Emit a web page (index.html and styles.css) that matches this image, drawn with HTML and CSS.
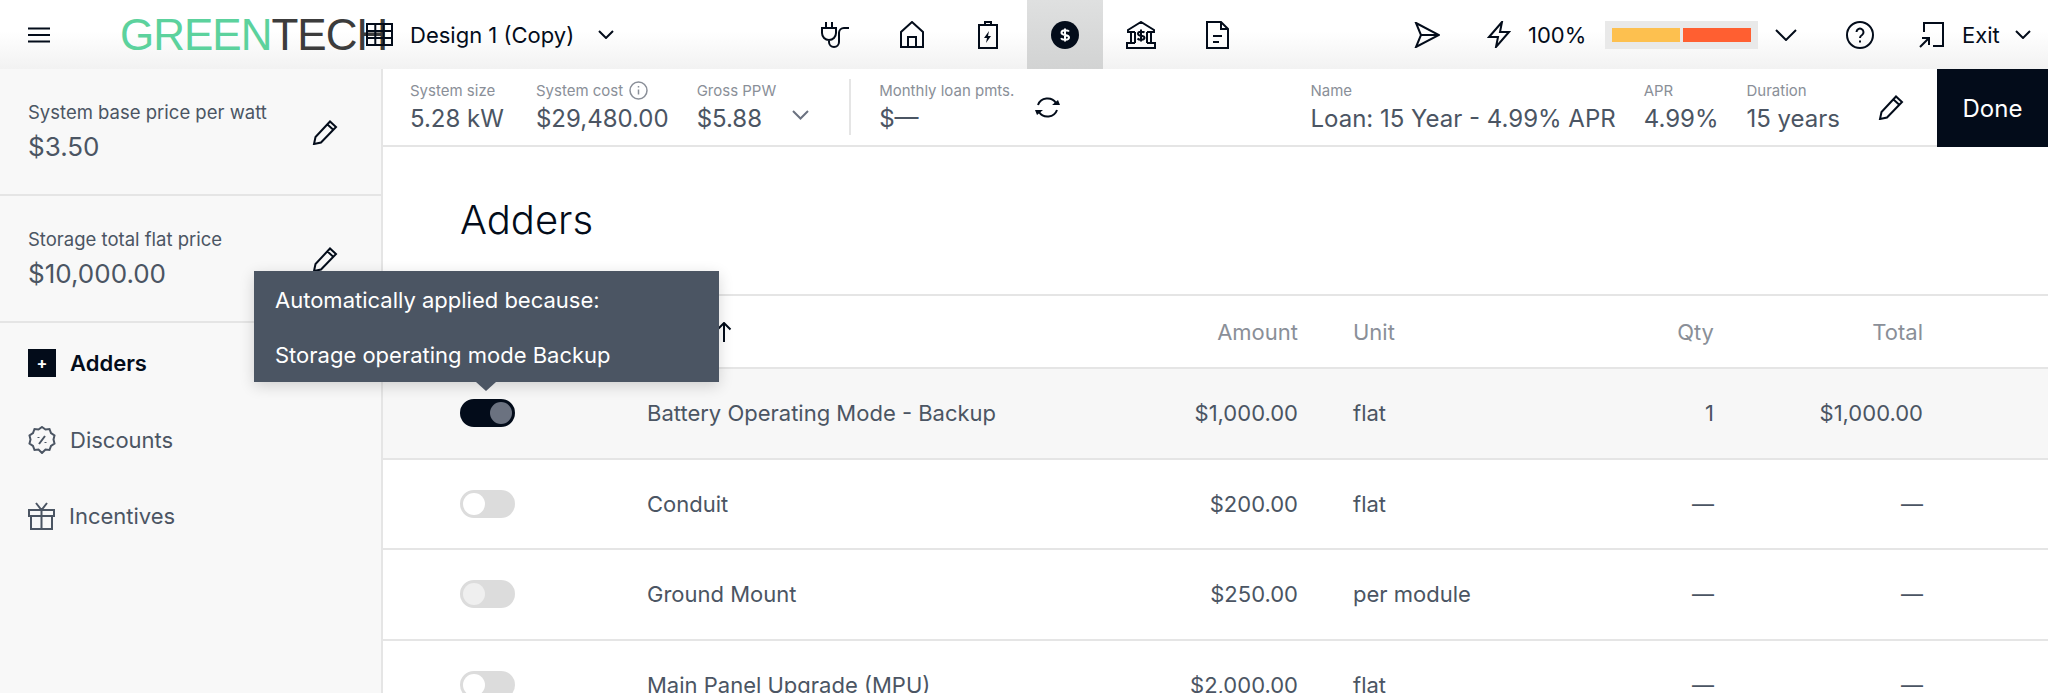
FILE: index.html
```html
<!DOCTYPE html>
<html lang="en">
<head>
<meta charset="utf-8">
<title>Adders</title>
<link rel="stylesheet" href="styles.css">
</head>
<body>
<div class="app">
  <header class="topbar">
    <div class="top-left">
      <svg class="ico burger" viewBox="0 0 24 16"><path d="M1 1.5h22M1 8h22M1 14.5h22"/></svg>
      <div class="logo"><span class="logo-green">GREEN</span><span class="logo-dark">TECH</span></div>
      <svg class="ico grid-ico" viewBox="0 0 27 23"><path d="M1 1h25v21H1zM9.3 1v21M17.7 1v21M1 8h25M1 15h25"/></svg>
      <span class="design">Design 1 (Copy)</span>
      <svg class="ico chev-sm" viewBox="0 0 16 9"><path d="M1 1l7 7 7-7"/></svg>
    </div>
    <nav class="tabs">
      <div class="tab"><svg class="ico" width="30" height="28" viewBox="0 0 30 28"><path d="M6 1v6M12 1v6M2 7h14v5a7 7 0 0 1-14 0zM9 19v2a5 5 0 0 0 10 0V12a5 5 0 0 1 5-5h5"/></svg></div>
      <div class="tab"><svg class="ico" width="24" height="27" viewBox="0 0 24 27"><path d="M1 26V11L12 1l11 10v15zM8 26V16h8v10"/></svg></div>
      <div class="tab"><svg class="ico" width="20" height="28" viewBox="0 0 20 28"><path d="M1 4h18v23H1zM7 4V1h6v3"/><path class="fill" d="M11 10l-5 7h3l-1 5 5-7h-3z"/></svg></div>
      <div class="tab active"><svg width="28" height="28" viewBox="0 0 28 28"><circle cx="14" cy="14" r="14" fill="#030c1a"/><path d="M18 10.500c-1-1.500-7.500-2-7.500 1.200 0 3.300 7.500 1.500 7.500 4.800 0 3-6.800 2.800-8 .7M14 7.500v13" fill="none" stroke="#fff" stroke-width="2"/></svg></div>
      <div class="tab"><svg class="ico" width="30" height="28" viewBox="0 0 30 28"><path d="M2 9L15 1l13 8v2h-3v11h4v5H1v-5h4V11H2zM5 11h4M25 11h-4M9 11v11M21 11v11M5 22h4M21 22h4"/><path d="M18.500 11.500c-1-1-6.500-1.500-6.500 1.200 0 3 6.500 1.300 6.500 4.100 0 2.500-5.500 2.500-7 .7M15 8.500v12"/></svg></div>
      <div class="tab"><svg class="ico" width="23" height="28" viewBox="0 0 23 28"><path d="M1 1h14l7 7v19H1zM15 1v7h7M7 15h9M7 21h6"/></svg></div>
    </nav>
    <div class="top-right">
      <svg class="ico send" width="26" height="26" viewBox="0 0 26 26"><path d="M2 1l23 12L2 25l5-12zM7 13h18"/></svg>
      <svg class="ico bolt" width="24" height="27" viewBox="0 0 24 27"><path d="M15 1L2 16h9l-2 10 13-15h-9z"/></svg>
      <span class="pct">100%</span>
      <div class="meter"><span class="seg seg-y"></span><span class="seg seg-o"></span></div>
      <svg class="ico chev-lg" viewBox="0 0 22 12"><path d="M1 1l10 10L21 1"/></svg>
      <svg class="ico help" width="28" height="28" viewBox="0 0 28 28"><circle cx="14" cy="14" r="13"/><path d="M10.500 11a3.500 3.500 0 1 1 5.500 3c-1.300.8-2 1.500-2 3M14 19.500v2"/></svg>
      <svg class="ico exit-ico" width="25" height="26" viewBox="0 0 25 26"><path d="M5 10V1h19v23H14M1 25l9-9M3 16h7v7"/></svg>
      <span class="exit">Exit</span>
      <svg class="ico chev-sm" viewBox="0 0 16 9"><path d="M1 1l7 7 7-7"/></svg>
    </div>
  </header>
  <div class="body">
    <aside class="side">
      <section class="price">
        <div><div class="price-label">System base price per watt</div><div class="price-val">$3.50</div></div>
        <svg class="ico pencil" width="27" height="26" viewBox="0 0 27 26"><path d="M2 25l1.500-7L18 2.500l6 5.500L9 23.500zM15.500 5.500l6 5.500"/></svg>
      </section>
      <section class="price">
        <div><div class="price-label">Storage total flat price</div><div class="price-val">$10,000.00</div></div>
        <svg class="ico pencil" width="27" height="26" viewBox="0 0 27 26"><path d="M2 25l1.500-7L18 2.500l6 5.500L9 23.500zM15.500 5.500l6 5.500"/></svg>
      </section>
      <ul class="nav">
        <li class="nav-item on"><span class="plus-box">+</span>Adders</li>
        <li class="nav-item"><svg class="ico nav-ico" width="28" height="28" viewBox="0 0 28 28"><path d="M14 1l3.500 2.500 4-.5 1.500 4 3.500 2.500-1 4 1 4-3.500 2.500-1.500 4-4-.5L14 27l-3.500-3.500-4 .5L5 20l-3.500-2.500 1-4-1-4L5 7l1.500-4 4 .5z"/><path d="M11 18l6-8M10.500 11v1M17.500 16v1"/></svg>Discounts</li>
        <li class="nav-item"><svg class="ico nav-ico" width="27" height="28" viewBox="0 0 27 28"><path d="M1 8h25v6H1zM3 14h21v13H3zM13.500 8v19M13.500 8L8 1M13.500 8L19 1"/></svg>Incentives</li>
      </ul>
    </aside>
    <main class="main">
      <div class="summary">
        <div class="stat"><div class="stat-label">System size</div><div class="stat-val">5.28 kW</div></div>
        <div class="stat s-cost"><div class="stat-label">System cost <svg class="ico info" width="19" height="19" viewBox="0 0 19 19"><circle cx="9.500" cy="9.500" r="8.500"/><path d="M9.500 8.500v5M9.500 5v1.500"/></svg></div><div class="stat-val">$29,480.00</div></div>
        <div class="stat s-ppw"><div class="stat-label">Gross PPW</div><div class="stat-val">$5.88</div></div>
        <svg class="ico chev-gray" viewBox="0 0 17 10"><path d="M1 1l7.500 7.500L16 1"/></svg>
        <div class="vline"></div>
        <div class="stat s-loan"><div class="stat-label">Monthly loan pmts.</div><div class="stat-val">$—</div></div>
        <svg class="ico refresh" width="27" height="23" viewBox="0 0 27 23"><path d="M4 9a10 9.500 0 0 1 18-2M23 14a10 9.500 0 0 1-18 2"/><path class="fill" d="M18 9h8l-2-5zM9 14H1l2 5z"/></svg>
        <div class="grow"></div>
        <div class="stat s-name"><div class="stat-label">Name</div><div class="stat-val">Loan: 15 Year - 4.99% APR</div></div>
        <div class="stat s-apr"><div class="stat-label">APR</div><div class="stat-val">4.99%</div></div>
        <div class="stat s-dur"><div class="stat-label">Duration</div><div class="stat-val">15 years</div></div>
        <svg class="ico pencil s-pencil" width="27" height="26" viewBox="0 0 27 26"><path d="M2 25l1.500-7L18 2.500l6 5.500L9 23.500zM15.500 5.500l6 5.500"/></svg>
        <button class="done">Done</button>
      </div>
      <h1 class="title">Adders</h1>
      <div class="table">
        <div class="row head">
          <div></div>
          <div class="name-head">Name <svg class="ico arrow" width="16" height="20" viewBox="0 0 16 20"><path d="M8 20V1M1.500 7.500L8 1l6.500 6.500"/></svg></div>
          <div class="num">Amount</div><div class="unit">Unit</div><div class="num">Qty</div><div class="num">Total</div>
        </div>
        <div class="row sel">
          <div><span class="toggle toggle-on"></span></div>
          <div>Battery Operating Mode - Backup</div>
          <div class="num">$1,000.00</div><div class="unit">flat</div><div class="num">1</div><div class="num">$1,000.00</div>
        </div>
        <div class="row">
          <div><span class="toggle"></span></div>
          <div>Conduit</div>
          <div class="num">$200.00</div><div class="unit">flat</div><div class="num">—</div><div class="num">—</div>
        </div>
        <div class="row">
          <div><span class="toggle toggle-dim"></span></div>
          <div>Ground Mount</div>
          <div class="num">$250.00</div><div class="unit">per module</div><div class="num">—</div><div class="num">—</div>
        </div>
        <div class="row">
          <div><span class="toggle"></span></div>
          <div>Main Panel Upgrade (MPU)</div>
          <div class="num">$2,000.00</div><div class="unit">flat</div><div class="num">—</div><div class="num">—</div>
        </div>
      </div>
    </main>
  </div>
  <div class="tooltip">
    <p>Automatically applied because:</p>
    <p>Storage operating mode Backup</p>
  </div>
</div>
</body>
</html>
```

FILE: styles.css
```css
* { box-sizing: border-box; }
html, body { margin: 0; height: 693px; overflow: hidden; background: #fff; }
body { font-family: Inter, "Liberation Sans", sans-serif; color: #4b5563; }
.app { position: relative; display: flex; flex-direction: column; height: 693px; overflow: hidden; }
.ico { fill: none; stroke: #030c1a; stroke-width: 2; flex: none; display: block; }
.ico .fill { fill: #030c1a; stroke: none; }

.topbar { position: relative; height: 69px; flex: none; display: flex; align-items: center; background: linear-gradient(#fff 45%, #f2f2f2); color: #030c1a; }
.top-left { display: flex; align-items: center; width: 797px; padding-left: 27px; }
.burger { width: 24px; height: 16px; }
.logo { margin-left: 69px; font-family: "Liberation Sans", sans-serif; font-size: 44px; line-height: 46px; transform-origin: left center; width: 193px; white-space: nowrap; letter-spacing: -1px; }
.logo-green { color: #5cd29d; }
.logo-dark { color: #3c3c3c; }
.grid-ico { width: 27px; height: 23px; margin-left: 53px; }
.design { margin-left: 17px; font-size: 22px; width: 173px; white-space: nowrap; }
.top-left .chev-sm { margin-left: 15px; }
.chev-sm { width: 16px; height: 9px; }
.tabs { display: flex; align-self: stretch; }
.tab { width: 76.500px; display: flex; align-items: center; justify-content: center; }
.tab.active { background: linear-gradient(#dfe0e0, #d2d3d3); }
.top-right { display: flex; align-items: center; flex: 1; padding-left: 158px; }
.bolt { margin-left: 47px; }
.pct { margin-left: 17px; font-size: 22px; width: 63px; white-space: nowrap; }
.meter { margin-left: 14px; width: 153px; height: 28px; background: #e9e9e9; display: flex; gap: 3px; padding: 7px; }
.seg { width: 70px; height: 14px; display: block; }
.seg-y { background: #fdc04f; }
.seg-o { background: #ff5f31; }
.chev-lg { width: 22px; height: 12px; margin-left: 17px; }
.help { margin-left: 49px; }
.exit-ico { margin-left: 45px; }
.exit { margin-left: 18px; font-size: 22px; width: 40px; }
.top-right .chev-sm { margin-left: 13px; }

.body { display: flex; flex: 1; min-height: 0; }
.side { width: 383px; flex: none; background: #f8f8f8; border-right: 2px solid #e5e5e5; }
.price { height: 127px; padding: 0 42px 0 28px; display: flex; align-items: center; justify-content: space-between; border-bottom: 2px solid #e5e5e5; }
.price-label { font-size: 18.500px; line-height: 26px; color: #4b5563; }
.price-val { font-size: 26px; line-height: 34px; margin-top: 5px; color: #4b5563; }
.nav { list-style: none; margin: 0; padding: 0 28px; }
.nav-item { height: 76.500px; display: flex; align-items: center; gap: 14px; font-size: 22px; color: #4b5563; }
.nav-item.on { color: #030c1a; font-weight: 600; margin-top: 2px; }
.plus-box { width: 28px; height: 28px; background: #030c1a; color: #fff; font-size: 16px; font-weight: 700; display: flex; align-items: center; justify-content: center; }
.nav-ico { stroke: #4b5563; }

.main { flex: 1; min-width: 0; }
.summary { height: 78px; display: flex; align-items: center; border-bottom: 2px solid #e5e5e5; padding-left: 27px; }
.stat { white-space: nowrap; }
.stat-label { font-size: 15px; line-height: 20px; color: #8a8f98; display: flex; align-items: center; gap: 6px; }
.stat-val { font-size: 24px; line-height: 30px; margin-top: 3px; color: #4b5563; }
.info { stroke: #8a8f98; stroke-width: 1.500; }
.s-cost { margin-left: 32px; }
.s-ppw { margin-left: 28px; }
.chev-gray { width: 17px; height: 10px; margin: 15px 0 0 16px; stroke: #6b7280; }
.vline { width: 2px; height: 56px; background: #e5e5e5; margin-left: 40px; }
.s-loan { margin-left: 28px; }
.refresh { margin-left: 20px; margin-top: 0; }
.grow { flex: 1; }
.s-apr { margin-left: 28px; }
.s-dur { margin-left: 28px; }
.s-pencil { margin-left: 38px; }
.done { margin-left: 32px; width: 111px; height: 78px; align-self: flex-start; border: 0; background: #030c1a; color: #fff; font: 24px Inter, "Liberation Sans", sans-serif; }

.title { margin: 0; height: 147px; padding: 48px 0 0 77px; font-size: 40px; line-height: 50px; font-weight: 300; color: #030c1a; }
.table { font-size: 22px; }
.row { display: grid; grid-template-columns: 187px 400px 251px 316px 100px 209px; align-items: center; height: 90.500px; padding-left: 77px; border-bottom: 2px solid #e5e5e5; white-space: nowrap; }
.row.head { height: 75px; color: #8a8f98; border-top: 2px solid #e5e5e5; }
.row.sel { background: #f7f7f7; }
.num { text-align: right; }
.unit { padding-left: 55px; }
.name-head { display: flex; align-items: center; gap: 8px; }
.toggle { display: block; width: 55px; height: 28px; border-radius: 14px; background: #dcdcdc; padding: 3px; }
.toggle::after { content: ""; display: block; width: 22px; height: 22px; border-radius: 50%; background: #fff; }
.toggle-on { background: #030c1a; display: flex; justify-content: flex-end; }
.toggle-on::after { background: #6b7280; }
.toggle-dim::after { background: #efefef; }

.tooltip { position: absolute; left: 254px; top: 271px; width: 465px; height: 111px; padding: 15px 21px; background: #4b5563; color: #fff; font-size: 22px; box-shadow: 0 4px 14px rgba(0,0,0,.16); }
.tooltip p { margin: 0; line-height: 28px; }
.tooltip p + p { margin-top: 27px; }
.tooltip::after { content: ""; position: absolute; left: 222px; bottom: -9px; width: 0; height: 0; border-left: 10px solid transparent; border-right: 10px solid transparent; border-top: 9px solid #4b5563; }
```
